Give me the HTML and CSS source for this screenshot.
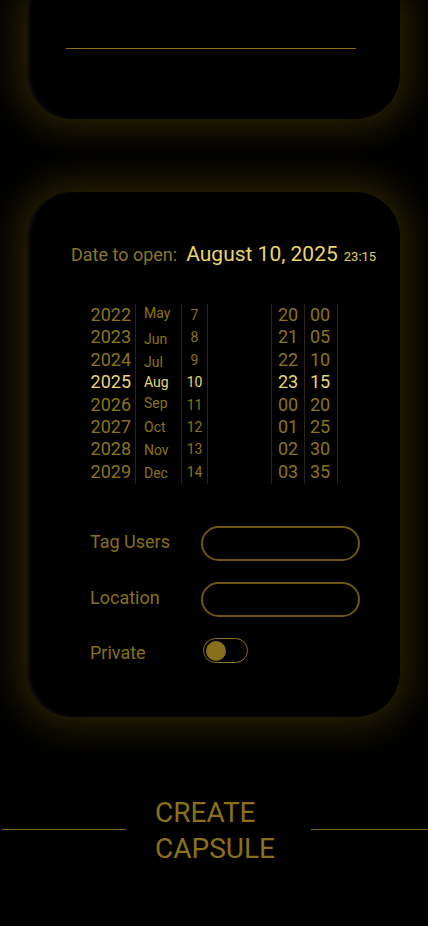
FILE: index.html
```html
<!DOCTYPE html>
<html>
<head>
<meta charset="utf-8">
<link rel="stylesheet" href="styles.css">
</head>
<body>
<div class="screen">
  <section class="card card-top">
    <div class="rule"></div>
  </section>

  <section class="card card-main">
    <div class="date-row">
      <span class="date-label">Date to open:</span>
      <span class="date-value">August 10, 2025</span>
      <span class="date-time">23:15</span>
    </div>

    <div class="picker">
      <div class="col col-year">
        <span>2022</span><span>2023</span><span>2024</span><span class="sel">2025</span><span>2026</span><span>2027</span><span>2028</span><span>2029</span>
      </div>
      <div class="col col-month">
        <span class="up">May</span><span class="down">Jun</span><span class="down">Jul</span><span class="sel">Aug</span><span class="up">Sep</span><span>Oct</span><span class="down1">Nov</span><span class="down1">Dec</span>
      </div>
      <div class="col col-day">
        <span>7</span><span>8</span><span>9</span><span class="sel">10</span><span>11</span><span>12</span><span>13</span><span>14</span>
      </div>
      <div class="col col-gap"></div>
      <div class="col col-hour">
        <span>20</span><span>21</span><span>22</span><span class="sel">23</span><span>00</span><span>01</span><span>02</span><span>03</span>
      </div>
      <div class="col col-min">
        <span>00</span><span>05</span><span>10</span><span class="sel">15</span><span>20</span><span>25</span><span>30</span><span>35</span>
      </div>
    </div>

    <div class="form">
      <div class="field">
        <label class="field-label">Tag Users</label>
        <div class="input"></div>
      </div>
      <div class="field">
        <label class="field-label">Location</label>
        <div class="input"></div>
      </div>
      <div class="field field-toggle">
        <label class="field-label">Private</label>
        <div class="toggle"><span class="knob"></span></div>
      </div>
    </div>
  </section>

  <div class="create">
    <span class="create-line"></span>
    <button class="create-btn">CREATE<br>CAPSULE</button>
    <span class="create-line"></span>
  </div>
</div>
</body>
</html>
```

FILE: styles.css
```css
* { box-sizing: border-box; }
html, body {
  margin: 0;
  padding: 0;
  background: #000;
}
body {
  font-family: Roboto, "Noto Sans", sans-serif;
  font-weight: 400;
  color: #8a7419;
  width: 428px;
  height: 926px;
  overflow: hidden;
}
.screen {
  display: flex;
  flex-direction: column;
}
.card {
  margin: 0 28px 0 27px;
  background: #000;
  box-shadow: inset 4px 0 4px -2px #161616, 0 0 36px 9px rgba(105, 86, 8, 0.42);
}
.card-top {
  height: 119px;
  border-radius: 0 0 45px 45px;
  padding: 48px 44px 0 39px;
}
.rule {
  height: 1px;
  background: #8a6d16;
}
.card-main {
  margin-top: 73px;
  height: 525px;
  border-radius: 45px;
  padding: 50px 0 0 0;
}
.date-row {
  display: flex;
  align-items: baseline;
  padding-left: 44px;
}
.date-label {
  font-size: 18px;
  color: #87762a;
  margin-right: 9px;
}
.date-value {
  font-size: 21px;
  color: #e8d56c;
  margin-right: 6px;
}
.date-time {
  font-size: 13px;
  color: #e0cd6a;
}
.picker {
  display: flex;
  margin-top: 38px;
  margin-left: 58px;
  height: 180px;
}
.col {
  display: flex;
  flex-direction: column;
  border-right: 1px solid #2a2410;
}
.col span {
  height: 22.4px;
  line-height: 22.4px;
  position: relative;
}
.col .sel { color: #e8d772; }
.col-year {
  width: 51px;
  text-align: right;
  padding-right: 4px;
  font-size: 18px;
}
.col-month {
  width: 46px;
  padding-left: 8px;
  font-size: 14px;
}
.col-month .up { top: -2px; }
.col-month .down { top: 2px; }
.col-month .down1 { top: 1px; }
.col-day {
  width: 26px;
  text-align: center;
  font-size: 14px;
}
.col-gap { width: 64px; }
.col-hour {
  width: 33px;
  padding-left: 6px;
  font-size: 18px;
}
.col-min {
  width: 33px;
  padding-left: 5px;
  font-size: 18px;
}
.form {
  margin-top: 42px;
  padding-left: 63px;
  display: flex;
  flex-direction: column;
  gap: 21px;
}
.field {
  display: flex;
  align-items: center;
  height: 35px;
}
.field-label {
  width: 111px;
  font-size: 18px;
  color: #857018;
  position: relative;
  top: -2px;
}
.input {
  width: 159px;
  height: 35px;
  border: 2px solid #6b5614;
  border-radius: 18px;
}
.field-toggle { height: 25px; }
.field-toggle .field-label { top: 2px; }
.toggle {
  margin-left: 2px;
  width: 45px;
  height: 25px;
  border: 1px solid #8a7018;
  border-radius: 13px;
  display: flex;
  align-items: center;
  padding-left: 2px;
}
.knob {
  width: 20px;
  height: 20px;
  border-radius: 50%;
  background: #86701e;
}
.create {
  margin-top: 75px;
  display: flex;
  align-items: center;
}
.create-line {
  height: 1px;
  background: #7a6418;
}
.create-line:first-child {
  margin-left: 2px;
  width: 124px;
}
.create-line:last-child {
  flex: 1;
}
.create-btn {
  flex: none;
  width: 185px;
  padding: 3px 0 0 29px;
  background: none;
  border: none;
  text-align: left;
  font-family: Roboto, "Noto Sans", sans-serif;
  font-weight: 400;
  font-size: 28px;
  line-height: 36px;
  color: #8a7119;
}
```
